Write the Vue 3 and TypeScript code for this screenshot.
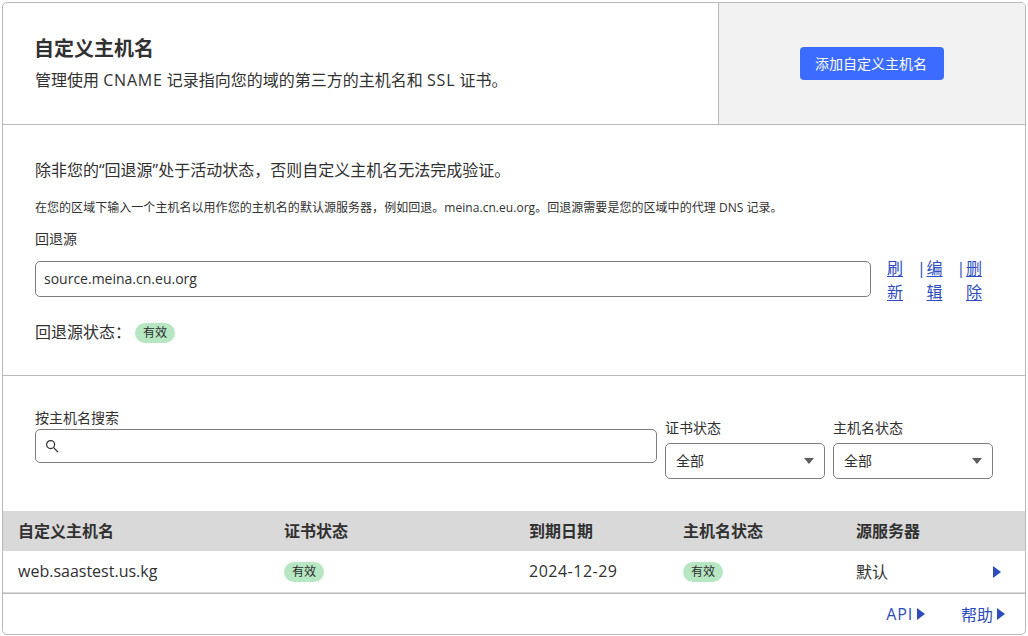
<script setup lang="ts">
const columns = ['自定义主机名', '证书状态', '到期日期', '主机名状态', '源服务器']
const filters = [
  { label: '证书状态', value: '全部' },
  { label: '主机名状态', value: '全部' },
]
</script>

<template>
  <div class="page">
    <div class="card">
      <header class="head">
        <div class="head-text">
          <h1 class="title">自定义主机名</h1>
          <p class="desc">管理使用 <span class="latin">CNAME</span> 记录指向您的域的第三方的主机名和 <span class="latin">SSL</span> 证书。</p>
        </div>
        <div class="head-action">
          <button class="primary">添加自定义主机名</button>
        </div>
      </header>

      <section class="fallback">
        <p class="notice">除非您的“回退源”处于活动状态，否则自定义主机名无法完成验证。</p>
        <p class="hint">在您的区域下输入一个主机名以用作您的主机名的默认源服务器，例如回退。meina.cn.eu.org。回退源需要是您的区域中的代理 DNS 记录。</p>
        <label class="field-label">回退源</label>
        <div class="source-row">
          <div class="source-input">source.meina.cn.eu.org</div>
          <div class="links">
            <a class="link first">刷新</a>
            <span class="sep">|</span>
            <a class="link">编辑</a>
            <span class="sep">|</span>
            <a class="link">删除</a>
          </div>
        </div>
        <div class="status-row">
          <span class="status-label">回退源状态：</span>
          <span class="badge">有效</span>
        </div>
      </section>

      <section class="filters">
        <div class="search">
          <label class="filter-label search-label">按主机名搜索</label>
          <div class="search-input">
            <svg class="search-icon" viewBox="0 0 14 14" width="14" height="14" fill="none" stroke="#333" stroke-width="1.2">
              <circle cx="5.6" cy="5.6" r="4" />
              <path d="M8.6 8.6 L13 13" />
            </svg>
          </div>
        </div>
        <div v-for="f in filters" :key="f.label" class="select-wrap">
          <label class="filter-label">{{ f.label }}</label>
          <div class="select">
            <span class="select-value">{{ f.value }}</span>
            <i class="caret"></i>
          </div>
        </div>
      </section>

      <div class="table-head">
        <div v-for="c in columns" :key="c" class="cell">{{ c }}</div>
      </div>
      <div class="table-row">
        <div class="cell name">web.saastest.us.kg</div>
        <div class="cell"><span class="badge">有效</span></div>
        <div class="cell date">2024-12-29</div>
        <div class="cell"><span class="badge">有效</span></div>
        <div class="cell">默认</div>
        <i class="row-arrow"></i>
      </div>

      <footer class="foot">
        <a class="foot-link api">API<i class="foot-arrow"></i></a>
        <a class="foot-link">帮助<i class="foot-arrow"></i></a>
      </footer>
    </div>
  </div>
</template>

<style>
html, body { margin: 0; background: #fff; }
</style>

<style scoped>
.page {
  width: 1028px;
  height: 636px;
  padding: 2px 2px 1px 2px;
  box-sizing: border-box;
  font-family: "Open Sans", "Noto Sans CJK SC", sans-serif;
  color: #313131;
}
.card {
  width: 1024px;
  height: 633px;
  box-sizing: border-box;
  border: 1px solid #b9b9b9;
  border-radius: 5px;
  overflow: hidden;
  display: flex;
  flex-direction: column;
}
.head {
  display: flex;
  height: 122px;
  box-sizing: border-box;
  border-bottom: 1px solid #b9b9b9;
  flex: none;
}
.head-text {
  width: 715px;
  flex: none;
  box-sizing: border-box;
  padding: 32px 0 0 32px;
}
.title {
  margin: 0 0 0 -1px;
  font-size: 20px;
  line-height: 28px;
  font-weight: 700;
}
.desc {
  margin: 5px 0 0;
  font-size: 16px;
  line-height: 24px;
}
.latin {
  letter-spacing: 0.8px;
}
.head-action {
  flex: 1;
  background: #f2f2f2;
  border-left: 1px solid #b9b9b9;
  display: flex;
  align-items: center;
  justify-content: center;
}
.primary {
  width: 144px;
  height: 33px;
  border: none;
  border-radius: 4px;
  background: #3b6cff;
  color: #fff;
  font: inherit;
  font-size: 14px;
  padding: 0 2px 2px 0;
}
.fallback {
  height: 251px;
  flex: none;
  box-sizing: border-box;
  border-bottom: 1px solid #b9b9b9;
  padding: 33px 32px 0;
}
.notice {
  margin: 0;
  font-size: 16px;
  line-height: 24px;
}
.hint {
  margin: 18px 0 0;
  font-size: 12px;
  line-height: 16px;
  letter-spacing: 0.04px;
  white-space: nowrap;
}
.field-label {
  display: block;
  margin-top: 13px;
  font-size: 14px;
  line-height: 20px;
}
.source-row {
  display: flex;
  margin-top: 7px;
}
.source-input {
  width: 836px;
  height: 36px;
  margin-top: 5px;
  box-sizing: border-box;
  border: 1px solid #7d7d7d;
  border-radius: 5px;
  padding-left: 8px;
  font-size: 14px;
  line-height: 34px;
}
.links {
  display: flex;
  margin-left: 16px;
  font-size: 16px;
  line-height: 24px;
  color: #2c4cc0;
}
.link {
  width: 16px;
  text-decoration: underline;
  text-underline-offset: 2px;
  word-break: break-all;
}
.sep {
  width: 9.5px;
  margin-left: 14px;
}
.status-row {
  display: flex;
  align-items: center;
  margin-top: 16px;
}
.status-label {
  font-size: 16px;
  line-height: 24px;
  margin-right: 4px;
  padding-bottom: 2px;
}
.badge {
  display: inline-block;
  width: 40px;
  height: 20px;
  border-radius: 10px;
  background: #b6e6c2;
  color: #2c2c2c;
  font-size: 12px;
  line-height: 20px;
  text-align: center;
}
.filters {
  height: 135px;
  flex: none;
  box-sizing: border-box;
  display: flex;
  align-items: flex-start;
  padding: 32px 0 0 32px;
}
.search {
  width: 622px;
  flex: none;
}
.filter-label {
  display: block;
  font-size: 14px;
  line-height: 20px;
}
.search-label {
  line-height: 19px;
  margin-bottom: 2px;
}
.search-input {
  height: 34px;
  box-sizing: border-box;
  border: 1px solid #7d7d7d;
  border-radius: 5px;
  display: flex;
  align-items: center;
  padding-left: 9px;
}
.search-icon {
  display: block;
}
.select-wrap {
  margin-left: 8px;
  width: 160px;
  flex: none;
  padding-top: 10px;
}
.select {
  height: 36px;
  box-sizing: border-box;
  border: 1px solid #7d7d7d;
  border-radius: 5px;
  display: flex;
  align-items: center;
  justify-content: space-between;
  padding: 0 10px;
  font-size: 14px;
  margin-top: 5px;
}
.select-value {
  padding-bottom: 2px;
}
.caret {
  width: 0;
  height: 0;
  border-left: 5px solid transparent;
  border-right: 5px solid transparent;
  border-top: 6px solid #5f5f5f;
}
.table-head,
.table-row {
  display: grid;
  grid-template-columns: 266px 245px 154px 173px 1fr;
  padding-left: 15px;
  flex: none;
  align-items: center;
  box-sizing: border-box;
}
.table-head {
  height: 40px;
  padding-bottom: 2px;
  background: #d9d9d9;
  font-size: 16px;
  font-weight: 700;
}
.table-row {
  height: 42px;
  padding-bottom: 2px;
  position: relative;
  font-size: 16px;
  border-bottom: 1px solid #d9d9d9;
}
.date {
  letter-spacing: 0.5px;
}
.table-row .badge {
  display: block;
  margin-top: 3px;
}
.row-arrow {
  position: absolute;
  right: 24px;
  top: 15px;
  width: 0;
  height: 0;
  border-top: 6px solid transparent;
  border-bottom: 6px solid transparent;
  border-left: 8px solid #2c4cc0;
}
.foot {
  flex: 1;
  border-top: 1px solid #b9b9b9;
  display: flex;
  justify-content: flex-end;
  align-items: center;
  gap: 36px;
  padding-right: 20px;
  padding-bottom: 1px;
  font-size: 16px;
  color: #2c4cc0;
}
.foot-link {
  display: inline-flex;
  align-items: center;
}
.api {
  letter-spacing: 0.8px;
}
.foot-arrow {
  width: 0;
  height: 0;
  margin-left: 4px;
  border-top: 6px solid transparent;
  border-bottom: 6px solid transparent;
  border-left: 8px solid #2c4cc0;
}
</style>
